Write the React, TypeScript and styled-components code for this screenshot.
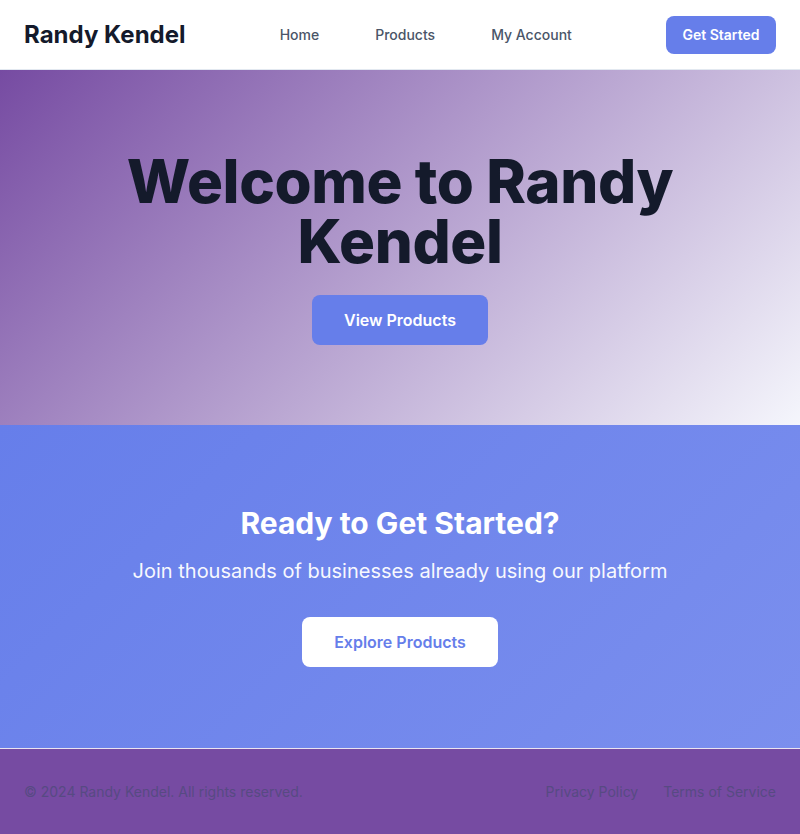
import React from "react";
import styled, { createGlobalStyle } from "styled-components";

const GlobalStyle = createGlobalStyle`
  * { box-sizing: border-box; }
  html, body { margin: 0; padding: 0; }
  body {
    font-family: Inter, "Noto Sans", "Liberation Sans", sans-serif;
    background: #ffffff;
    -webkit-font-smoothing: antialiased;
  }
`;

const Page = styled.div`
  display: flex;
  flex-direction: column;
  min-height: 834px;
`;

const Header = styled.header`
  display: flex;
  align-items: center;
  justify-content: space-between;
  height: 70px;
  padding: 0 24px;
  background: #ffffff;
  border-bottom: 1px solid #e2e8f0;
`;

const Logo = styled.div`
  font-size: 24px;
  font-weight: 700;
  color: #141a2b;
`;

const Nav = styled.nav`
  display: flex;
  align-items: center;
  gap: 56px;
`;

const NavLink = styled.a`
  font-size: 14px;
  font-weight: 500;
  color: #4a5568;
  text-decoration: none;
`;

const Button = styled.button<{ $variant?: "primary" | "light"; $size?: "sm" | "lg" }>`
  border: none;
  cursor: pointer;
  font-family: inherit;
  font-weight: 600;
  border-radius: 8px;
  background: ${(p) => (p.$variant === "light" ? "#ffffff" : "#667eea")};
  color: ${(p) => (p.$variant === "light" ? "#667eea" : "#ffffff")};
  font-size: ${(p) => (p.$size === "sm" ? "14px" : "16px")};
  line-height: 18px;
  padding: ${(p) => (p.$size === "sm" ? "10px 16.5px" : "16px 32.5px")};
`;

const Hero = styled.section`
  display: flex;
  flex-direction: column;
  align-items: center;
  padding: 81px 24px 80px;
  background: linear-gradient(135deg, #764ba2 0%, #f5f6fc 100%);
  text-align: center;
`;

const HeroTitle = styled.h1`
  margin: 0 0 24px;
  max-width: 600px;
  font-size: 60px;
  line-height: 60px;
  font-weight: 800;
  color: #141a2b;
  letter-spacing: -0.4px;
`;

const Cta = styled.section`
  display: flex;
  flex-direction: column;
  align-items: center;
  padding: 80px 24px 81px;
  background: linear-gradient(135deg, #667eea 0%, #7b8fee 100%);
  text-align: center;
  color: #ffffff;
`;

const CtaTitle = styled.h2`
  margin: 0 0 15px;
  font-size: 30px;
  line-height: 36px;
  font-weight: 700;
`;

const CtaText = styled.p`
  margin: 0 0 31px;
  font-size: 20px;
  line-height: 30px;
  font-weight: 400;
  opacity: 0.95;
`;

const Footer = styled.footer`
  display: flex;
  align-items: center;
  justify-content: space-between;
  padding: 32px 24px;
  background: #764ba2;
  border-top: 1px solid rgba(255, 255, 255, 0.85);
  font-size: 14px;
  line-height: 21px;
  color: #574a82;
`;

const FooterLinks = styled.div`
  display: flex;
  gap: 25px;
`;

const FooterLink = styled.a`
  color: inherit;
  text-decoration: none;
`;

export default function App() {
  return (
    <>
      <GlobalStyle />
      <Page>
        <Header>
          <Logo>Randy Kendel</Logo>
          <Nav>
            <NavLink href="#">Home</NavLink>
            <NavLink href="#">Products</NavLink>
            <NavLink href="#">My Account</NavLink>
          </Nav>
          <Button $size="sm">Get Started</Button>
        </Header>
        <Hero>
          <HeroTitle>Welcome to Randy Kendel</HeroTitle>
          <Button>View Products</Button>
        </Hero>
        <Cta>
          <CtaTitle>Ready to Get Started?</CtaTitle>
          <CtaText>Join thousands of businesses already using our platform</CtaText>
          <Button $variant="light">Explore Products</Button>
        </Cta>
        <Footer>
          <span>© 2024 Randy Kendel. All rights reserved.</span>
          <FooterLinks>
            <FooterLink href="#">Privacy Policy</FooterLink>
            <FooterLink href="#">Terms of Service</FooterLink>
          </FooterLinks>
        </Footer>
      </Page>
    </>
  );
}
